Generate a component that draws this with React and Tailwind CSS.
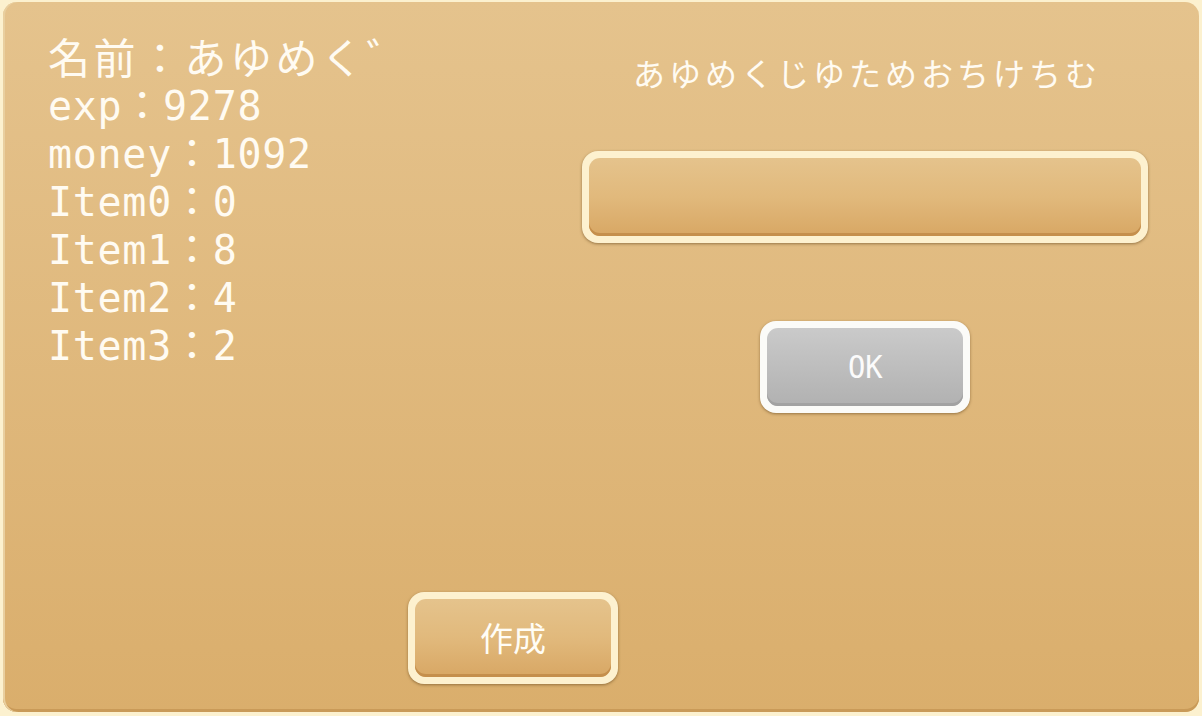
import React from "react";

const mono = { fontFamily: '"DejaVu Sans Mono", "Noto Sans CJK JP", monospace' };
const jp = { fontFamily: '"Noto Sans CJK JP", "Noto Sans", sans-serif' };

function GoldButton({ children, gray = false, className = "" }) {
  return (
    <div
      className={
        "rounded-[16px] p-[7px] shadow-[0_1px_3px_rgba(90,60,20,0.55)] " +
        (gray ? "bg-[#fbfbf8] " : "bg-[#fdf1cf] ") +
        className
      }
    >
      <div
        className={
          "h-full w-full rounded-[11px] flex items-center justify-center text-[#fffdf6] " +
          (gray
            ? "bg-gradient-to-b from-[#cacaca] to-[#b1b1b1] shadow-[inset_0_-3px_0_#a2a2a2]"
            : "bg-gradient-to-b from-[#e5c38c] via-[#e1b97c] to-[#d8a764] shadow-[inset_0_-3px_0_#c58f4c]")
        }
      >
        {children}
      </div>
    </div>
  );
}

export default function App() {
  const stats = [
    ["exp", "9278"],
    ["money", "1092"],
    ["Item0", "0"],
    ["Item1", "8"],
    ["Item2", "4"],
    ["Item3", "2"],
  ];

  return (
    <div className="w-[1202px] h-[716px] bg-[#fcf1cf] pl-[3px] pr-[3px] pt-[2px] pb-[4px] overflow-hidden">
      <div className="h-full w-full rounded-[14px] bg-gradient-to-b from-[#e5c38d] to-[#daae6c] shadow-[inset_2px_0_0_#e9cf9f,inset_0_-3px_0_#c99a58] flex flex-col">
        <div className="flex">
          {/* left: status */}
          <div className="w-[535px] pl-[45px] pt-[28px] text-[#fffbf2] text-[40px] leading-[48px]" style={mono}>
            <div style={jp} className="text-[42px] leading-[52px] tracking-[3.5px]">名前：あゆめく゛</div>
            {stats.map(([k, v]) => (
              <div key={k} className="tracking-[0.7px]">
                {k}：{v}
              </div>
            ))}
          </div>

          {/* right: name input */}
          <div className="w-[566px] ml-[44px] pt-[48px] flex flex-col items-center">
            <div className="text-[#fffbf2] text-[32px] leading-[44px] tracking-[4px] pl-[4px]" style={jp}>
              あゆめくじゆためおちけちむ
            </div>
            <GoldButton className="mt-[57px] w-[566px] h-[92px]" />
            <GoldButton gray className="mt-[78px] w-[210px] h-[92px]">
              <span className="text-[32px] text-[#fbfbfb] scale-x-90 inline-block" style={mono}>OK</span>
            </GoldButton>
          </div>
        </div>

        <div className="mt-auto pb-[28px] pl-[405px]">
          <GoldButton className="w-[210px] h-[92px]">
            <span className="text-[33px]" style={jp}>作成</span>
          </GoldButton>
        </div>
      </div>
    </div>
  );
}
